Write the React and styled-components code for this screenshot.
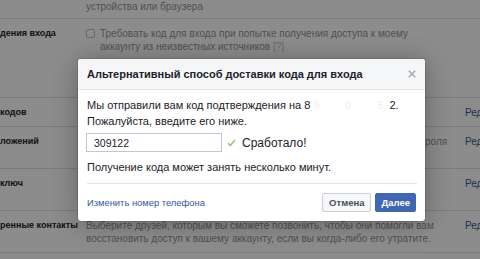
import React from "react";
import styled, { createGlobalStyle } from "styled-components";

const GlobalStyle = createGlobalStyle`
  html, body {
    margin: 0;
    padding: 0;
    background: #fff;
    font-family: "Liberation Sans", Helvetica, Arial, sans-serif;
  }
`;

const Page = styled.div`
  position: relative;
  width: 480px;
  height: 259px;
  overflow: hidden;
  background: #fff;
`;

const Table = styled.div`
  display: flex;
  flex-direction: column;
`;

const Row = styled.div`
  display: grid;
  grid-template-columns: 86px 379px 1fr;
  align-items: start;
  padding: ${({ $top }) => ($top ? "0 0 5px" : "8px 0 7px")};
  min-height: ${({ $minHeight }) => $minHeight || 0}px;
  box-sizing: border-box;
  border-bottom: 1px solid #dddfe2;
  font-size: 10px;
  line-height: 13px;
`;

const Label = styled.div`
  font-size: 9px;
  font-weight: bold;
  color: #1d2129;
  white-space: nowrap;
  overflow: hidden;
`;

const Desc = styled.div`
  color: #90949c;
  display: flex;
  gap: 5px;
  align-items: flex-start;
  white-space: nowrap;
`;

const Check = styled.span`
  flex: none;
  width: 7px;
  height: 7px;
  margin-top: 2px;
  border: 1px solid #bec3c9;
  border-radius: 2px;
  background: #fff;
`;

const Hint = styled.span`
  color: #bec3c9;
`;

const Edit = styled.div`
  color: #365899;
  white-space: nowrap;
`;

const Overlay = styled.div`
  position: absolute;
  inset: 0;
  background: rgba(0, 0, 0, 0.45);
  padding: 59px 0 0 78px;
  box-sizing: border-box;
`;

const Modal = styled.div`
  width: 347px;
  background: #fff;
  border-radius: 3px;
  box-shadow: 0 2px 26px rgba(0, 0, 0, 0.3), 0 0 0 1px rgba(0, 0, 0, 0.1);
  overflow: hidden;
`;

const Header = styled.div`
  height: 31px;
  box-sizing: border-box;
  display: flex;
  align-items: center;
  justify-content: space-between;
  padding: 0 9px;
  background: #f5f6f7;
  border-bottom: 1px solid #e5e5e5;
`;

const Title = styled.h2`
  margin: 0;
  font-size: 11px;
  font-weight: bold;
  color: #1d2129;
`;

const Close = styled.button`
  border: 0;
  padding: 0;
  background: none;
  width: 8px;
  height: 8px;
  display: flex;
`;

const Body = styled.div`
  padding: 7px 8px 0 9px;
  font-size: 11px;
  line-height: 16px;
  color: #1d2129;
`;

const Text = styled.p`
  margin: 0;
`;

const Masked = styled.span`
  display: inline-block;
  width: 76px;
  white-space: nowrap;
  overflow: hidden;
  color: #f0f0f0;
  letter-spacing: 4px;
  vertical-align: top;
`;

const CodeRow = styled.div`
  display: flex;
  align-items: center;
  gap: 5px;
  margin: 4px 0 7px;
`;

const CodeInput = styled.input`
  width: 136px;
  height: 19px;
  box-sizing: border-box;
  border: 1px solid #bdc7d8;
  padding: 0 7px;
  font-family: inherit;
  font-size: 10.5px;
  color: #1d2129;
  outline: none;
  margin-left: -1px;
`;

const Success = styled.span`
  display: flex;
  align-items: center;
  gap: 6px;
  font-size: 12px;
`;

const Divider = styled.hr`
  margin: 8px 0 0;
  border: 0;
  border-top: 1px solid #e5e5e5;
`;

const Footer = styled.div`
  display: flex;
  align-items: center;
  justify-content: space-between;
  padding: 9px;
`;

const ChangeLink = styled.a`
  color: #365899;
  font-size: 9.4px;
  text-decoration: none;
`;

const Buttons = styled.div`
  display: flex;
  gap: 4px;
`;

const Button = styled.button`
  height: 19px;
  padding: 0 ${({ $primary }) => ($primary ? 5 : 6)}px;
  border-radius: 2px;
  border: 1px solid ${({ $primary }) => ($primary ? "#4267b2" : "#ccd0d5")};
  background: ${({ $primary }) => ($primary ? "#4267b2" : "#f6f7f9")};
  color: ${({ $primary }) => ($primary ? "#fff" : "#4b4f56")};
  font-family: inherit;
  font-size: 9.5px;
  font-weight: bold;
  line-height: 17px;
`;

const rows = [
  { top: true, label: "", desc: "устройства или браузера" },
  {
    label: "дения входа",
    check: true,
    desc: (
      <>
        Требовать код для входа при попытке получения доступа к моему
        <br />
        аккаунту из неизвестных источников <Hint>[?]</Hint>
      </>
    ),
    minHeight: 79,
  },
  { label: "кодов", desc: "", edit: true },
  {
    label: "ложений",
    desc: (
      <>
        Используйте пароли приложений для входа в эти приложения вместо пароля
        <br />
        от Facebook.
      </>
    ),
    edit: true,
  },
  {
    label: "ключ",
    desc: (
      <>
        Используйте ключ безопасности для входа
        <br />
        на незнакомых устройствах.
      </>
    ),
    edit: true,
  },
  {
    label: "ренные контакты",
    desc: (
      <>
        Выберите друзей, которым вы сможете позвонить, чтобы они помогли вам
        <br />
        восстановить доступ к вашему аккаунту, если вы когда-либо его утратите.
      </>
    ),
    edit: true,
  },
];

export default function App() {
  return (
    <>
      <GlobalStyle />
      <Page>
        <Table>
          {rows.map((r, i) => (
            <Row key={i} $top={r.top} $minHeight={r.minHeight}>
              <Label>{r.label}</Label>
              <Desc>
                {r.check && <Check />}
                <span>{r.desc}</span>
              </Desc>
              {r.edit ? <Edit>Редактировать</Edit> : <span />}
            </Row>
          ))}
        </Table>

        <Overlay>
          <Modal>
            <Header>
              <Title>Альтернативный способ доставки кода для входа</Title>
              <Close aria-label="Закрыть">
                <svg width="8" height="8" viewBox="0 0 8 8">
                  <path d="M0.8 0.8L7.2 7.2M7.2 0.8L0.8 7.2" stroke="#a7abb1" strokeWidth="1.5" />
                </svg>
              </Close>
            </Header>
            <Body>
              <Text>
                Мы отправили вам код подтверждения на 8{" "}
                <Masked>9 · 0 · 5 · 1 · 2</Masked>2.
                <br />
                Пожалуйста, введите его ниже.
              </Text>
              <CodeRow>
                <CodeInput defaultValue="309122" />
                <Success>
                  <svg width="9" height="8" viewBox="0 0 9 8">
                    <path d="M1 4.2L3.4 6.5L8 1" fill="none" stroke="#9fcb8a" strokeWidth="1.8" />
                  </svg>
                  Сработало!
                </Success>
              </CodeRow>
              <Text>Получение кода может занять несколько минут.</Text>
              <Divider />
            </Body>
            <Footer>
              <ChangeLink href="#">Изменить номер телефона</ChangeLink>
              <Buttons>
                <Button>Отмена</Button>
                <Button $primary>Далее</Button>
              </Buttons>
            </Footer>
          </Modal>
        </Overlay>
      </Page>
    </>
  );
}
